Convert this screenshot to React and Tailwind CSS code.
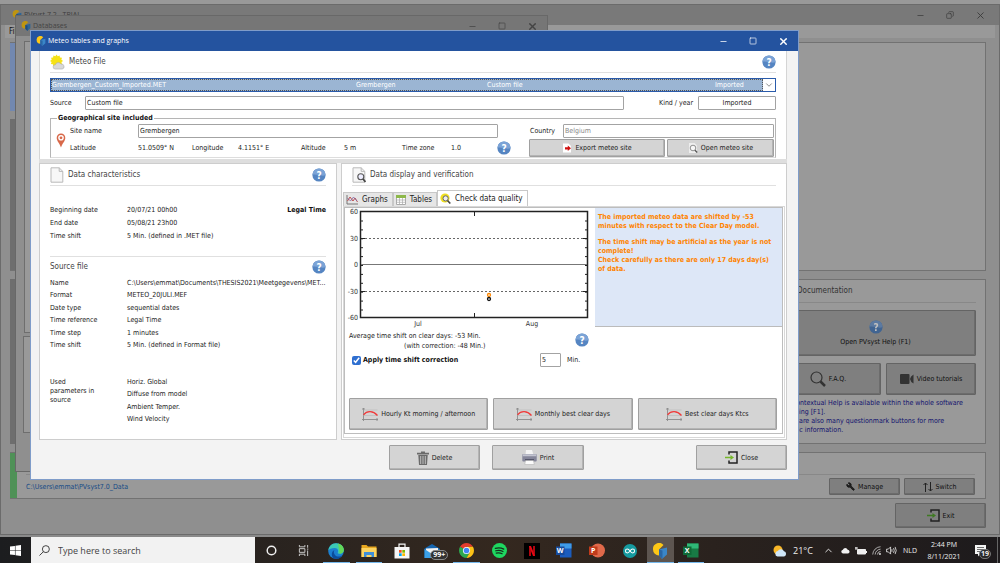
import { useState } from 'react';
import clsx from 'clsx';
import { Minus, Square, X, Copy, Wrench, ChevronDown, ChevronUp } from 'lucide-react';

const HelpIcon = ({ dim }) => (
  <svg viewBox="0 0 14 14" className={clsx('h-[14px] w-[14px] shrink-0', dim && 'brightness-75')}>
    <circle cx="7" cy="7" r="6.6" fill="#5585c2" />
    <path d="M.4 7a6.6 6.6 0 0 1 13.2 0C10 9 4 5.500.4 7Z" fill="#7ba3d6" />
    <text x="7" y="10.7" fontSize="10" fontWeight="bold" textAnchor="middle" fill="#fff">?</text>
  </svg>
);

const AppLogo = ({ className }) => (
  <svg viewBox="0 0 16 16" className={className}>
    <path d="M1 6.500a6 6 0 0 1 10.500-4.500L7 6.500v6A6 6 0 0 1 1 6.500Z" fill="#fdc716" />
    <path d="m7 6.500 8-2v7L10 16l-3-3.500Z" fill="#3a86c8" />
    <path d="m7 6.500 3.500 1V16L7 12.500Z" fill="#2a66a5" />
  </svg>
);

const SunIcon = () => (
  <svg viewBox="0 0 16 16" className="h-4 w-[15px]">
    <path d="m7 0 1.200 1.800L10.300 1l.3 2.200 2.200.2-.7 2.100 1.900 1.300-1.800 1.300.6 2.200-2.200.3-.4 2.200-2.100-.7L7 13.800l-1.300-1.900-2.100.8-.4-2.200L1 10.200l.7-2.100L0 6.900l1.800-1.300-.7-2.100 2.200-.2.300-2.200 2.100.7Z" fill="#f6e215" />
    <path d="M5.500 15.500a2.300 2.300 0 0 1 .3-4.600 3.200 3.200 0 0 1 5.900-.6 2.600 2.600 0 0 1 1.300 5.200Z" fill="#d8d8d8" stroke="#aaa" strokeWidth=".6" />
  </svg>
);

const PageIcon = ({ lens }) => (
  <svg viewBox="0 0 14 16" className="h-4 w-[14px] shrink-0">
    <path d="M1 .8h8.200L12.800 4.400v10.800H1Z" fill="#f7f7f7" stroke="#b9b9b9" />
    <path d="M9.200.8v3.600h3.600" fill="none" stroke="#b9b9b9" />
    {lens && (
      <>
        <circle cx="8.800" cy="9.800" r="3" fill="#eef" stroke="#555" strokeWidth="1.100" />
        <path d="m11 12 2.500 3" stroke="#444" strokeWidth="1.800" />
      </>
    )}
  </svg>
);

const PinIcon = () => (
  <svg viewBox="0 0 10 15" className="h-[15px] w-[10px]">
    <path d="M5 .5A4.300 4.300 0 0 1 9.300 5C9.300 8 6.500 10 5 14.500 3.500 10 .7 8 .7 5A4.300 4.300 0 0 1 5 .5Z" fill="#d8694a" />
    <circle cx="5" cy="4.800" r="2.800" fill="#fff" />
    <circle cx="5" cy="4.800" r="1.400" fill="#d8694a" />
  </svg>
);

const CurveIcon = () => (
  <svg viewBox="0 0 16 13" className="h-[13px] w-4 shrink-0" fill="none">
    <path d="M1.500 0v13M0 11.500h16M0 1h3M15 10v3" stroke="#8a8a8a" strokeWidth=".9" />
    <path d="M1.500 7.500h14M1.500 2h14" stroke="#b5b5b5" strokeWidth=".6" />
    <path d="M1.500 6.800C5 2.500 11 2.500 15.500 7.500" stroke="#f03a3a" strokeWidth="1.300" />
  </svg>
);

const GraphsIcon = () => (
  <svg viewBox="0 0 12 10" className="h-[10px] w-3" fill="none">
    <path d="M1 0v9h11" stroke="#777" />
    <path d="m1.500 6 2.500-4 3 4 2-3 2.500 4" stroke="#c0504d" />
    <path d="m1.500 3 3 3 3-4 3.500 4" stroke="#8064a2" strokeWidth=".8" />
  </svg>
);

const TablesIcon = () => (
  <svg viewBox="0 0 10 10" className="h-[10px] w-[10px]">
    <path d="M.5.500h9v9h-9Z" fill="#fff" stroke="#aaa" />
    <path d="M0 0h10v3H0Z" fill="#8db84a" />
    <path d="M0 5h10M0 7.300h10M3.500 3v7M6.500 3v7" stroke="#aaa" strokeWidth=".7" />
  </svg>
);

const QualityIcon = () => (
  <svg viewBox="0 0 11 11" className="h-[11px] w-[11px]">
    <circle cx="5" cy="5" r="4.600" fill="#f0e020" />
    <circle cx="5.600" cy="5.400" r="2.600" fill="#eee" stroke="#666" />
    <path d="m7.500 7.500 2.800 3" stroke="#444" strokeWidth="1.600" />
  </svg>
);

const ExportIcon = () => (
  <svg viewBox="0 0 10 10" className="h-[10px] w-[10px]">
    <path d="M1 .500h5.500L9 3v6.500H1Z" fill="#fff" />
    <path d="M3 4.300h2.800V2.500L9 5.300 5.800 8V6.400H3Z" fill="#d01010" />
  </svg>
);

const LensPage = () => (
  <svg viewBox="0 0 10 10" className="h-[10px] w-[10px]">
    <path d="M1 0h5.500L9 2.500V10H1Z" fill="#eee" />
    <circle cx="5" cy="5" r="2.800" fill="#f7f7f7" stroke="#777" strokeWidth=".8" />
    <path d="m7 7.200 2.200 2.200" stroke="#555" strokeWidth="1.400" />
  </svg>
);

const TrashIcon = () => (
  <svg viewBox="0 0 12 14" className="h-[14px] w-3">
    <path d="M4 .5h4v1.200h4v1.800H0V1.700h4ZM1.300 4h9.400L10 14H2Z" fill="#6a6a6a" />
    <path d="M3.700 5v8M6 5v8M8.300 5v8" stroke="#c8c8c8" strokeWidth=".9" />
  </svg>
);

const PrinterIcon = () => (
  <svg viewBox="0 0 15 15" className="h-[15px] w-[15px]">
    <path d="M4 0h6l1.500 5h-8Z" fill="#f4f4f4" />
    <rect x=".3" y="4" width="14.400" height="7.500" rx="1" fill="#85869a" />
    <path d="M1 4.200h13l.5 2H.5Z" fill="#c3c4d0" />
    <path d="M3 9h9v2H3Z" fill="#55566a" />
    <path d="M3.500 10.500h8l.7 4H2.800Z" fill="#fafafa" stroke="#aaa" strokeWidth=".5" />
  </svg>
);

const DoorIcon = ({ dark }) => (
  <svg viewBox="0 0 13 13" className="h-[13px] w-[13px]" fill="none">
    <path d="M4 3.500V1h8v11H4V9.500" stroke="#222" strokeWidth="1.500" />
    <path d="M0 6.500h7" stroke={dark ? '#3f7a22' : '#76b82a'} strokeWidth="1.500" />
    <path d="m5.500 4 3.500 2.500L5.500 9Z" fill={dark ? '#3f7a22' : '#76b82a'} />
  </svg>
);

const SearchGlyph = () => (
  <svg viewBox="0 0 16 16" className="h-4 w-4" fill="none" stroke="#333">
    <circle cx="6.500" cy="6.500" r="5.500" strokeWidth="1.200" />
    <path d="m10.500 10.500 4.500 4.500" strokeWidth="2.500" />
  </svg>
);

const CameraIcon = () => (
  <svg viewBox="0 0 14 10" className="h-[10px] w-[14px]" fill="#333">
    <rect width="9.500" height="10" rx="1" />
    <path d="M10 5q.5-3 3.500-4.500v9Q10.500 8 10 5Z" />
  </svg>
);

const SwitchIcon = () => (
  <svg viewBox="0 0 10 10" className="h-[10px] w-[10px]" fill="none" stroke="#222">
    <path d="M2.500 10V1M.5 3l2-2 2 2M7.500 0v9M5.500 7l2 2 2-2" />
  </svg>
);

const Button = ({ icon, children, className }) => (
  <button
    type="button"
    className={clsx(
      'flex items-center justify-center gap-[3px] rounded-[1px] border border-[#a0a0a0] bg-[#d4d4d4] whitespace-nowrap shadow-[inset_-1px_-1px_0_#b4b4b4]',
      className
    )}
  >
    {icon}
    {children}
  </button>
);

const DimButton = ({ icon, children, className }) => (
  <button
    type="button"
    className={clsx(
      'flex items-center justify-center gap-[3px] rounded-[1px] border border-[#646464] bg-[#7f7f7f] whitespace-nowrap text-[#101010] shadow-[inset_-1px_-1px_0_#6c6c6c]',
      className
    )}
  >
    {icon}
    {children}
  </button>
);

const WindowControls = ({ maximized, className }) => (
  <div className={clsx('flex', className)}>
    <button type="button" aria-label="Minimize" className="flex w-[30px] items-center justify-center">
      <Minus size={9} />
    </button>
    <button type="button" aria-label="Maximize" className="flex w-[30px] items-center justify-center">
      {maximized ? <Copy size={8} className="-scale-x-100" /> : <Square size={8} />}
    </button>
    <button type="button" aria-label="Close" className="flex w-[30px] items-center justify-center">
      <X size={11} strokeWidth={maximized ? 2 : 3} />
    </button>
  </div>
);

const fieldClass = 'h-[14px] min-w-0 rounded-[1px] border border-[#a3a3a3] bg-white px-px';

const sourceRows = [
  ['Name', 'C:\\Users\\emmat\\Documents\\THESIS2021\\Meetgegevens\\MET...'],
  ['Format', 'METEO_20JULI.MEF'],
  ['Date type', 'sequential dates'],
  ['Time reference', 'Legal Time'],
  ['Time step', '1 minutes'],
  ['Time shift', '5 Min. (defined in Format file)'],
];

const usedParameters = ['Horiz. Global', 'Diffuse from model', 'Ambient Temper.', 'Wind Velocity'];

const SectionHeader = ({ icon, title, help, className }) => (
  <div className={clsx('flex h-[22px] items-center gap-1 border-b border-[#e0e0e0] text-[8px] text-[#444]', className)}>
    {icon}
    <h2>{title}</h2>
    {help && (
      <button type="button" aria-label="Help" className="ml-auto">
        <HelpIcon />
      </button>
    )}
  </div>
);

/* Time shift in minutes for each clear day */
const ShiftChart = () => {
  const ticks = Array.from({ length: 11 }, (_, i) => 13 + i * 8.9);
  return (
    <svg width="246" height="120" viewBox="0 0 246 120" className="shrink-0" fontSize="7" fill="#333">
      <rect x="15.500" y="3.500" width="227" height="106" fill="#fff" stroke="#222" strokeWidth="1.500" />
      {ticks.map((y) => (
        <path key={y} d={`M16 ${y}h2M240 ${y}h2`} stroke="#222" />
      ))}
      <path d="M16 30.500h226M16 83.500h226" stroke="#666" strokeDasharray="2 2" />
      <path d="M16 30.500h4M16 83.500h4M238 30.500h4M238 83.500h4M129.500 4v4M129.500 105v4" stroke="#222" />
      <path d="M16 56.500h226" stroke="#777" />
      <circle cx="144" cy="87" r="1.500" fill="none" stroke="#f80" strokeWidth="1.300" />
      <circle cx="144" cy="91" r="1.500" fill="none" stroke="#111" strokeWidth="1.300" />
      <g textAnchor="end">
        <text x="13" y="6">60</text>
        <text x="13" y="33">30</text>
        <text x="13" y="59">0</text>
        <text x="13" y="86">-30</text>
        <text x="13" y="112">-60</text>
      </g>
      <g textAnchor="middle">
        <text x="73" y="118">Jul</text>
        <text x="187" y="118">Aug</text>
      </g>
    </svg>
  );
};

const MeteoFilePanel = () => (
  <section className="border-x border-[#d5d5d5] bg-white px-[10px]">
    <SectionHeader icon={<SunIcon />} title="Meteo File" help className="pt-px" />
    <div className="relative mt-[5px] h-[14px] border border-[#2a5bab] bg-white">
      <select
        aria-label="Meteo file"
        className="block h-full w-[calc(100%-12px)] appearance-none border border-dotted border-[#555] bg-[#9bb5d3] leading-[10px] text-white"
      >
        <option>Grembergen_Custom_Imported.MET</option>
      </select>
      <div className="pointer-events-none absolute inset-0 flex items-center leading-[12px] text-white">
        <span className="ml-auto w-[131px]">Grembergen</span>
        <span className="w-[228px]">Custom file</span>
        <span className="w-[49px]">Imported</span>
        <ChevronDown size={10} className="mr-px text-[#777]" />
      </div>
    </div>
    <div className="mt-1 flex items-center">
      <label htmlFor="source" className="w-[35px]">Source</label>
      <input id="source" defaultValue="Custom file" className={clsx(fieldClass, 'flex-1')} />
      <label htmlFor="kind" className="ml-[35px] w-[39px] whitespace-nowrap">Kind / year</label>
      <input id="kind" defaultValue="Imported" className={clsx(fieldClass, 'w-[78px] text-center')} />
    </div>
    <fieldset className="mt-[3px] border border-[#b5b5b5] border-b-[#ddd] px-px">
      <legend className="ml-[5px] px-px leading-[11px] font-bold text-[#111]">Geographical site included</legend>
      <div className="flex items-center">
        <div className="flex w-[18px] justify-center">
          <PinIcon />
        </div>
        <div className="min-w-0 flex-1">
          <div className="flex items-center pr-[13px]">
            <label htmlFor="site" className="w-[68px]">Site name</label>
            <input id="site" defaultValue="Grembergen" className={clsx(fieldClass, 'flex-1')} />
          </div>
          <div className="flex h-[19px] items-center">
            <span className="w-[68px]">Latitude</span>
            <span className="w-[54px]">51.0509° N</span>
            <span className="w-[46px]">Longitude</span>
            <span className="w-[63px]">4.1151° E</span>
            <span className="w-[43px]">Altitude</span>
            <span className="w-[58px]">5 m</span>
            <span className="w-[49px]">Time zone</span>
            <span>1.0</span>
            <button type="button" aria-label="Help about the site" className="ml-auto">
              <HelpIcon />
            </button>
          </div>
        </div>
        <div className="ml-[18px] w-[245px]">
          <div className="flex items-center">
            <label htmlFor="country" className="w-[34px] pl-px">Country</label>
            <input id="country" defaultValue="Belgium" className={clsx(fieldClass, 'flex-1 text-[#888]')} />
          </div>
          <div className="mt-px flex gap-[2px]">
            <Button icon={<ExportIcon />} className="h-[18px] w-[136px]">Export meteo site</Button>
            <Button icon={<LensPage />} className="h-[18px] flex-1">Open meteo site</Button>
          </div>
        </div>
      </div>
    </fieldset>
    <div className="h-px" />
  </section>
);

const CharacteristicsPanel = () => (
  <section className="w-[298px] shrink-0 border border-[#cdcdcd] bg-white px-[10px]">
    <SectionHeader icon={<PageIcon />} title="Data characteristics" help />
    <dl className="mt-[18px] grid grid-cols-[77px_1fr_auto] leading-[13px]">
      <dt>Beginning date</dt>
      <dd>20/07/21 00h00</dd>
      <dd className="font-bold text-[#111]">Legal Time</dd>
      <dt>End date</dt>
      <dd className="col-span-2">05/08/21 23h00</dd>
      <dt>Time shift</dt>
      <dd className="col-span-2">5 Min. (defined in .MET file)</dd>
    </dl>
    <div className="mt-[13px] flex h-[21px] items-center justify-between border-t border-[#e0e0e0] text-[8px] text-[#444]">
      <h2>Source file</h2>
      <button type="button" aria-label="Help about the source file">
        <HelpIcon />
      </button>
    </div>
    <dl className="grid h-[74px] grid-cols-[77px_1fr] content-between leading-[12px] whitespace-nowrap">
      {sourceRows.map(([label, value]) => (
        <div key={label} className="contents">
          <dt>{label}</dt>
          <dd>{value}</dd>
        </div>
      ))}
    </dl>
    <div className="mt-[25px] mb-[14px] grid grid-cols-[77px_1fr]">
      <p className="w-[50px] pt-[2px] leading-[9px]">Used parameters in source</p>
      <ul className="flex h-[49px] flex-col justify-between leading-[12px]">
        {usedParameters.map((name) => (
          <li key={name}>{name}</li>
        ))}
      </ul>
    </div>
  </section>
);

const tabs = [
  { name: 'Graphs', icon: <GraphsIcon /> },
  { name: 'Tables', icon: <TablesIcon /> },
  { name: 'Check data quality', icon: <QualityIcon /> },
];

const VerificationPanel = () => {
  const [activeTab, setActiveTab] = useState('Check data quality');
  const [corrected, setCorrected] = useState(true);

  return (
    <section className="flex min-w-0 flex-1 flex-col border border-[#cdcdcd] bg-white p-px pt-0">
      <div className="px-[9px]">
        <SectionHeader icon={<PageIcon lens />} title="Data display and verification" />
      </div>
      <div role="tablist" className="mt-1 flex items-end text-[8px]">
        {tabs.map(({ name, icon }) => (
          <button
            key={name}
            type="button"
            role="tab"
            aria-selected={name === activeTab}
            onClick={() => setActiveTab(name)}
            className={clsx(
              'flex items-center gap-1 border border-b-0 border-[#c8c8c8] pr-1 pl-[2px]',
              name === activeTab ? 'h-4 bg-white' : 'h-[14px] bg-[#e6e6e6]'
            )}
          >
            {icon}
            {name}
          </button>
        ))}
      </div>
      <div className="flex-1 border border-[#d8d8d8] pr-px pb-[3px]">
        <div className="h-full border border-[#bdbdbd] pb-[3px]">
          <div className="flex justify-between">
            <ShiftChart />
            <div className="mb-px w-[187px] border-b border-[#bbb] bg-[#dde7f7] px-[3px] pt-[5px] leading-[9px] font-bold text-[#ff8400]">
              <p>
                The imported meteo data are shifted by -53
                <br />
                minutes with respect to the Clear Day model.
              </p>
              <p className="mt-[7px]">
                The time shift may be artificial as the year is not
                <br />
                complete!
                <br />
                Check carefully as there are only 17 days day(s)
                <br />
                of data.
              </p>
            </div>
          </div>
          <div className="flex items-center">
            <div className="w-[230px] pl-1 leading-[10px]">
              <p className="pt-[3px]">Average time shift on clear days: -53 Min.</p>
              <p className="pl-[55px]">(with correction: -48 Min.)</p>
            </div>
            <button type="button" aria-label="Help about the time shift">
              <HelpIcon />
            </button>
          </div>
          <div className="mt-[2px] flex h-[14px] items-center pl-[7px]">
            <label className="flex w-[188px] items-center gap-[2px] font-bold text-[#111]">
              <input
                type="checkbox"
                checked={corrected}
                onChange={(e) => setCorrected(e.target.checked)}
                className="h-[9px] w-[9px] accent-[#2f6fd0]"
              />
              Apply time shift correction
            </label>
            <input id="shift" defaultValue="5" className={clsx(fieldClass, 'w-[21px]')} />
            <label htmlFor="shift" className="ml-[6px]">Min.</label>
          </div>
          <div className="mt-[31px] grid grid-cols-3 gap-[5px] pr-[5px] pl-1">
            <Button icon={<CurveIcon />} className="h-8">Hourly Kt morning / afternoon</Button>
            <Button icon={<CurveIcon />} className="h-8">Monthly best clear days</Button>
            <Button icon={<CurveIcon />} className="h-8">Best clear days Ktcs</Button>
          </div>
        </div>
      </div>
    </section>
  );
};

const MeteoWindow = () => (
  <div className="absolute top-[30px] right-[201px] left-[30px] border border-[#7f9cc9] bg-[#f3f3f3] text-[#222]">
    <header className="flex h-5 items-center bg-[#24539f] pl-[5px] text-white">
      <AppLogo className="mr-[2px] h-[10px] w-[10px]" />
      <h1 className="font-['Open_Sans','Noto_Sans',sans-serif] text-[7px]">Meteo tables and graphs</h1>
      <WindowControls className="ml-auto h-full" />
    </header>
    <main className="pr-[11px] pl-2">
      <MeteoFilePanel />
      <div className="h-1 bg-[#dedede]" />
      <div className="flex gap-1">
        <CharacteristicsPanel />
        <VerificationPanel />
      </div>
      <footer className="mt-[5px] mb-[9px] flex pl-[350px]">
        <Button icon={<TrashIcon />} className="h-[25px] w-[91px]">Delete</Button>
        <Button icon={<PrinterIcon />} className="ml-3 h-[25px] w-[92px]">Print</Button>
        <Button icon={<DoorIcon />} className="ml-auto h-[25px] w-[91px]">Close</Button>
      </footer>
    </main>
  </div>
);

const DatabasesWindow = () => (
  <div className="absolute top-[15px] left-[15px] flex h-[457px] w-[533px] flex-col border border-[#686868] bg-[#8f8f8f]">
    <header className="flex h-5 shrink-0 items-center bg-[#767676] pl-[5px] text-[#444]">
      <AppLogo className="mr-[2px] h-[10px] w-[10px] brightness-75" />
      <h2 className="font-['Open_Sans','Noto_Sans',sans-serif] text-[7px]">Databases</h2>
      <WindowControls maximized={false} className="ml-auto h-full" />
    </header>
    <div className="mx-2 mt-[5px] h-[292px] border border-[#6e6e6e] bg-[#999]" />
    <div className="mx-[7px] mt-[3px] h-[97px] border border-[#6e6e6e] bg-[#999]" />
  </div>
);

const MainWindow = () => (
  <div className="flex flex-1 flex-col border border-[#6b6b6b] bg-[#8f8f8f]">
    <header className="flex h-5 items-center bg-[#797979] pl-[11px] text-[#3c3c3c]">
      <AppLogo className="mr-[2px] h-[10px] w-[10px] brightness-75" />
      <h1 className="font-['Open_Sans','Noto_Sans',sans-serif] text-[7px]">PVsyst 7.2 - TRIAL</h1>
      <WindowControls maximized className="ml-auto h-full pr-1" />
    </header>
    <nav className="mx-1 h-[13px] bg-[#999] pl-1 text-[8px] leading-[13px] text-[#111]">
      <a href="#file">File</a>
    </nav>
    <div className="mt-1 flex flex-1 flex-col pr-[13px] pl-[9px]">
      <div className="flex h-[229px] flex-col border border-l-0 border-[#727272] bg-[#999]">
        <div className="h-[68px] w-[5px] bg-[#7288b0]" />
        <div className="h-2 w-[5px] bg-[#8f8f8f]" />
        <div className="w-[5px] flex-1 bg-[#6e6e6e]" />
      </div>
      <div className="flex justify-between pt-2">
        <div className="w-[5px] bg-[#6e6e6e]" />
        <section className="w-[221px] border border-[#727272] bg-[#999] px-[9px] pb-2">
          <h2 className="border-b border-[#888] pl-[22px] text-[8px] leading-[22px] text-[#333]">Documentation</h2>
          <DimButton className="mt-[7px] h-[46px] w-full flex-col" icon={<HelpIcon dim />}>
            Open PVsyst Help (F1)
          </DimButton>
          <div className="mt-[7px] flex gap-[5px]">
            <DimButton className="h-8 flex-1" icon={<SearchGlyph />}>
              F.A.Q.
            </DimButton>
            <DimButton className="h-8 w-[90px]" icon={<CameraIcon />}>
              Video tutorials
            </DimButton>
          </div>
          <p className="mt-1 pl-1 leading-[9px] whitespace-nowrap text-[#12126e]">
            The contextual Help is available within the whole software
            <br />
            by typing [F1].
            <br />
            There are also many questionmark buttons for more
            <br />
            specific information.
          </p>
        </section>
      </div>
      <div className="mt-2 flex h-[47px] border border-l-0 border-[#727272] bg-[#999]">
        <div className="w-[7px] bg-[#4f9157]" />
        <div className="mr-[10px] ml-[9px] flex flex-1 flex-col justify-end">
          <div className="border-t border-[#888] pt-[3px]">
            <div className="flex items-center gap-1 pb-[3px]">
              <a href="#workspace" className="mr-auto text-[#154a86]">
                C:\Users\emmat\PVsyst7.0_Data
              </a>
              <DimButton className="h-[17px] w-[71px]" icon={<Wrench size={9} fill="#222" className="-scale-x-100" />}>
                Manage
              </DimButton>
              <DimButton className="h-[17px] w-[71px]" icon={<SwitchIcon />}>
                Switch
              </DimButton>
            </div>
          </div>
        </div>
      </div>
      <DimButton className="mt-1 mb-[6px] h-[25px] w-[91px] self-end" icon={<DoorIcon dark />}>
        Exit
      </DimButton>
    </div>
  </div>
);

const EdgeIcon = () => (
  <svg viewBox="0 0 16 16" className="h-4 w-4">
    <circle cx="8" cy="8" r="7.800" fill="#1b7fd0" />
    <path d="M.3 7.500C1 3 4 .2 8 .2c4.500 0 7.800 3.200 7.800 6.800 0 2.400-1.800 3.800-4 3.800-1.500 0-2.300-.6-2-1.300.8-1.500.2-4.500-3-4.500C3.500 5 1 6 .3 7.500Z" fill="#3cc8b4" />
    <path d="M10 .5c3.500.8 5.800 3.500 5.800 6.500 0 2.400-1.800 3.800-4 3.800Z" fill="#63d858" />
    <path d="M6.500 7c-1.700 2 0 6.500 4 6.500 1.700 0 3-.5 4-1.300A7.800 7.800 0 0 1 6 15.500C3 14 3 8.500 6.500 7Z" fill="#0c4d9c" />
  </svg>
);

const FolderIcon = () => (
  <svg viewBox="0 0 16 14" className="h-[14px] w-4">
    <path d="M.5 1h5l1.500 1.500h8.500V13H.5Z" fill="#e8a820" />
    <path d="M.5 4h15v9H.5Z" fill="#fcd462" />
    <path d="M3 13V8h10v5h-2.500v-2h-5v2Z" fill="#3f8fd8" />
  </svg>
);

const StoreIcon = () => (
  <svg viewBox="0 0 16 16" className="h-4 w-4">
    <path d="M5 5V1.200h6V5" fill="none" stroke="#f5f5f5" strokeWidth="1.200" />
    <path d="M.5 4h15v11.500H.5Z" fill="#f5f5f5" />
    <path d="M5 7h2.700v2.700H5Z" fill="#f25022" />
    <path d="M8.300 7H11v2.700H8.300Z" fill="#7fba00" />
    <path d="M5 10.300h2.700V13H5Z" fill="#00a4ef" />
    <path d="M8.300 10.300H11V13H8.300Z" fill="#ffb900" />
  </svg>
);

const MailIcon = () => (
  <span className="relative">
    <svg viewBox="0 0 16 14" className="-ml-1 h-[14px] w-4">
      <path d="m8 0 7.500 4.500V14H.5V4.500Z" fill="#1565b0" />
      <path d="m2 4.500 12-.5v4L8 11 2 8Z" fill="#f3f3f3" />
      <path d="M.5 5 8 10l7.500-5v9H.5Z" fill="#3aa0e8" />
    </svg>
    <span className="absolute top-[6px] left-[2px] rounded-full border border-[#888] bg-[#333] px-[2px] text-[7px] leading-[8px] font-bold text-white">
      99+
    </span>
  </span>
);

const ChromeIcon = () => (
  <svg viewBox="0 0 16 16" className="h-[15px] w-[15px]">
    <path d="M8 8 1.100 4A8 8 0 0 1 14.900 4H8Z" fill="#e33b2e" />
    <path d="M8 8 1.100 4A8 8 0 0 0 8 16l3.500-6Z" fill="#2da94f" />
    <path d="M8 16a8 8 0 0 0 6.900-12H8l3.500 6Z" fill="#fbc116" />
    <circle cx="8" cy="8" r="3.800" fill="#fff" />
    <circle cx="8" cy="8" r="3" fill="#4285f4" />
  </svg>
);

const SpotifyIcon = () => (
  <svg viewBox="0 0 16 16" className="h-[15px] w-[15px]" fill="none">
    <circle cx="8" cy="8" r="8" fill="#1ed760" />
    <path d="M3.500 5.700c3-.9 6.500-.6 9 .8M4 8.300c2.600-.7 5.500-.4 7.700.8M4.500 10.700c2.200-.5 4.500-.3 6.300.7" stroke="#15301c" strokeWidth="1.300" strokeLinecap="round" />
  </svg>
);

const NetflixIcon = () => (
  <svg viewBox="0 0 16 16" className="h-4 w-4">
    <path d="M0 0h16v16H0Z" fill="#000" />
    <path d="M5 3h2v10H5ZM9 3h2v10H9Z" fill="#b1060f" />
    <path d="M5 3h2l4 10H9Z" fill="#e50914" />
  </svg>
);

const OfficeIcon = ({ letter, back, light, tile, round }) => (
  <svg viewBox="0 0 16 15" className="h-[15px] w-4">
    {round ? (
      <circle cx="9" cy="7.500" r="7" fill={back} />
    ) : (
      <>
        <path d="M4 .5h11.500v14H4Z" fill={back} />
        <path d="M4 .5h11.500v5H4Z" fill={light} />
      </>
    )}
    <path d="M0 3.500h8.500V12H0Z" fill={tile} />
    <text x="4.200" y="10.200" fontSize="7" fontWeight="bold" textAnchor="middle" fill="#fff">{letter}</text>
  </svg>
);

const ArduinoIcon = () => (
  <svg viewBox="0 0 16 16" className="h-[14px] w-[14px]" fill="none">
    <circle cx="8" cy="8" r="8" fill="#159a9f" />
    <path d="M8 8C7 6.500 6.200 5.800 5 5.800a2.200 2.200 0 0 0 0 4.400C6.200 10.200 7 9.500 8 8s1.800-2.200 3-2.200a2.200 2.200 0 0 1 0 4.400C9.800 10.200 9 9.500 8 8Z" stroke="#fff" strokeWidth="1.200" />
  </svg>
);

const taskbarApps = [
  {
    name: 'Cortana',
    icon: (
      <svg viewBox="0 0 12 12" className="h-[11px] w-[11px]">
        <circle cx="6" cy="6" r="4.700" fill="none" stroke="#f0f0f0" strokeWidth="1.600" />
      </svg>
    ),
  },
  {
    name: 'Task view',
    icon: (
      <svg viewBox="0 0 12 12" className="h-[11px] w-[11px]" fill="none" stroke="#d5d5d5">
        <path d="M1.500 0v2h6V0M1.500 12v-2h6v2M1.500 4h6v4h-6ZM10.500 0v3M10.500 6v6M9.800 4.500h1.500" />
      </svg>
    ),
  },
  { name: 'Edge', icon: <EdgeIcon />, open: true },
  { name: 'File Explorer', icon: <FolderIcon />, open: true },
  { name: 'Microsoft Store', icon: <StoreIcon /> },
  { name: 'Mail', icon: <MailIcon /> },
  { name: 'Chrome', icon: <ChromeIcon />, open: true },
  { name: 'Spotify', icon: <SpotifyIcon /> },
  { name: 'Netflix', icon: <NetflixIcon /> },
  { name: 'Word', icon: <OfficeIcon letter="W" back="#1b5cbe" light="#3f9be8" tile="#164a9c" /> },
  { name: 'PowerPoint', icon: <OfficeIcon letter="P" back="#e0694a" tile="#c13b1b" round /> },
  { name: 'Arduino', icon: <ArduinoIcon /> },
  { name: 'PVsyst', icon: <AppLogo className="h-4 w-4" />, open: true, active: true },
  { name: 'Excel', icon: <OfficeIcon letter="X" back="#187a45" light="#2fb877" tile="#0f6a37" />, open: true },
];

const Taskbar = () => (
  <footer className="flex h-[27px] shrink-0 items-stretch bg-linear-to-r from-[#1c1d1f] via-[#34281f] to-[#1d1a1c] font-['Open_Sans','Noto_Sans',sans-serif] text-[#eee]">
    <button type="button" aria-label="Start" className="flex w-[31px] items-center justify-center">
      <svg viewBox="0 0 12 12" className="h-[11px] w-[11px]" fill="#fff">
        <path d="M0 1.700 5.400 1v4.700H0ZM6 .9 12 0v5.700H6ZM0 6.300h5.400V11L0 10.300ZM6 6.300h6V12l-6-.9Z" />
      </svg>
    </button>
    <label className="flex w-56 items-center gap-2 bg-[#f2f2f2] pl-2 text-[#333]">
      <svg viewBox="0 0 12 12" className="h-[11px] w-[11px] shrink-0" fill="none" stroke="#333">
        <circle cx="7.500" cy="4.500" r="3.800" />
        <path d="M4.800 7.300.5 11.500" />
      </svg>
      <input
        aria-label="Search"
        placeholder="Type here to search"
        className="min-w-0 flex-1 text-[9px] placeholder:text-[#444]"
      />
    </label>
    <div className="flex w-[452px]">
      {taskbarApps.map(({ name, icon, open, active }) => (
        <button
          key={name}
          type="button"
          aria-label={name}
          className={clsx(
            'flex flex-1 items-center justify-center border-y-2 border-t-transparent',
            active ? 'mx-px' : 'mx-[3px]',
            open ? 'border-b-[#76b9ed]' : 'border-b-transparent',
            active && 'bg-[#5d5550]'
          )}
        >
          {icon}
        </button>
      ))}
    </div>
    <div className="ml-auto flex items-center">
      <svg viewBox="0 0 14 12" className="h-3 w-[14px]">
        <circle cx="5" cy="5" r="4.500" fill="#f9b728" />
        <path d="M4.500 11.500a2.800 2.800 0 0 1 .3-5.500A3.500 3.500 0 0 1 11 6.300a2.700 2.700 0 0 1 .2 5.200Z" fill="#cfe6f8" />
      </svg>
      <span className="ml-[6px] w-[30px] text-[9px]">21°C</span>
      <ChevronUp size={11} />
      <svg viewBox="0 0 12 8" className="ml-[6px] h-[7px] w-[11px]" fill="#f2f2f2">
        <path d="M3 7.500a2.300 2.300 0 0 1 0-4.500A3 3 0 0 1 8.500 3a2.300 2.300 0 0 1 .5 4.500Z" />
      </svg>
      <svg viewBox="0 0 12 8" className="ml-1 h-[8px] w-[12px]" fill="none" stroke="#eee">
        <path d="M2.500 2.500h8v4.500h-8Z" fill="#eee" />
        <path d="M11.500 4v2M0 1h3M1 0v3" />
      </svg>
      <svg viewBox="0 0 10 10" className="ml-[5px] h-[9px] w-[9px]" fill="none" stroke="#ddd" strokeWidth=".8">
        <path d="M.8 9.500A9 9 0 0 1 9.500.8M3.500 9.500a6.300 6.300 0 0 1 6-6M6 9.500a3.800 3.800 0 0 1 3.500-3.500" />
        <circle cx="8.800" cy="8.800" r=".8" fill="#ddd" />
      </svg>
      <svg viewBox="0 0 12 10" className="ml-[5px] h-[9px] w-[11px]" fill="none" stroke="#eee" strokeWidth=".9">
        <path d="M.5 3.500h2L5 1v8L2.500 6.500h-2ZM6.500 3.500v3M8.300 2.300q1.500 2.700 0 5.400M10 1q2.500 4 0 8" />
      </svg>
      <span className="ml-[6px] w-[22px] text-[7px]">NLD</span>
      <time className="w-[38px] text-center text-[7px] leading-[12px]">
        2:44 PM
        <br />
        8/11/2021
      </time>
      <span className="relative mr-[10px] ml-3">
        <svg viewBox="0 0 12 12" className="h-[12px] w-[12px]">
          <path d="M0 0h11v9H5L3 11.500V9H0Z" fill="#f4f4f4" />
          <path d="M2 2.500h7M2 4.500h7M2 6.500h5" stroke="#333" strokeWidth=".7" />
        </svg>
        <span className="absolute top-1 left-1 rounded-full border border-[#777] bg-[#2a2a2a] px-px text-[7px] leading-[8px] font-bold">
          19
        </span>
      </span>
      <div className="h-full w-[3px] border-l border-[#666]" />
    </div>
  </footer>
);

const App = () => (
  <div className="flex min-h-screen flex-col bg-[#999] font-['DejaVu_Sans_Condensed','DejaVu_Sans',sans-serif] text-[7px] leading-[10px]">
    <div className="relative flex flex-1 flex-col border-b-2 border-[#8a8a8a] pt-1">
      <MainWindow />
      <DatabasesWindow />
      <MeteoWindow />
    </div>
    <Taskbar />
  </div>
);

export default App;
